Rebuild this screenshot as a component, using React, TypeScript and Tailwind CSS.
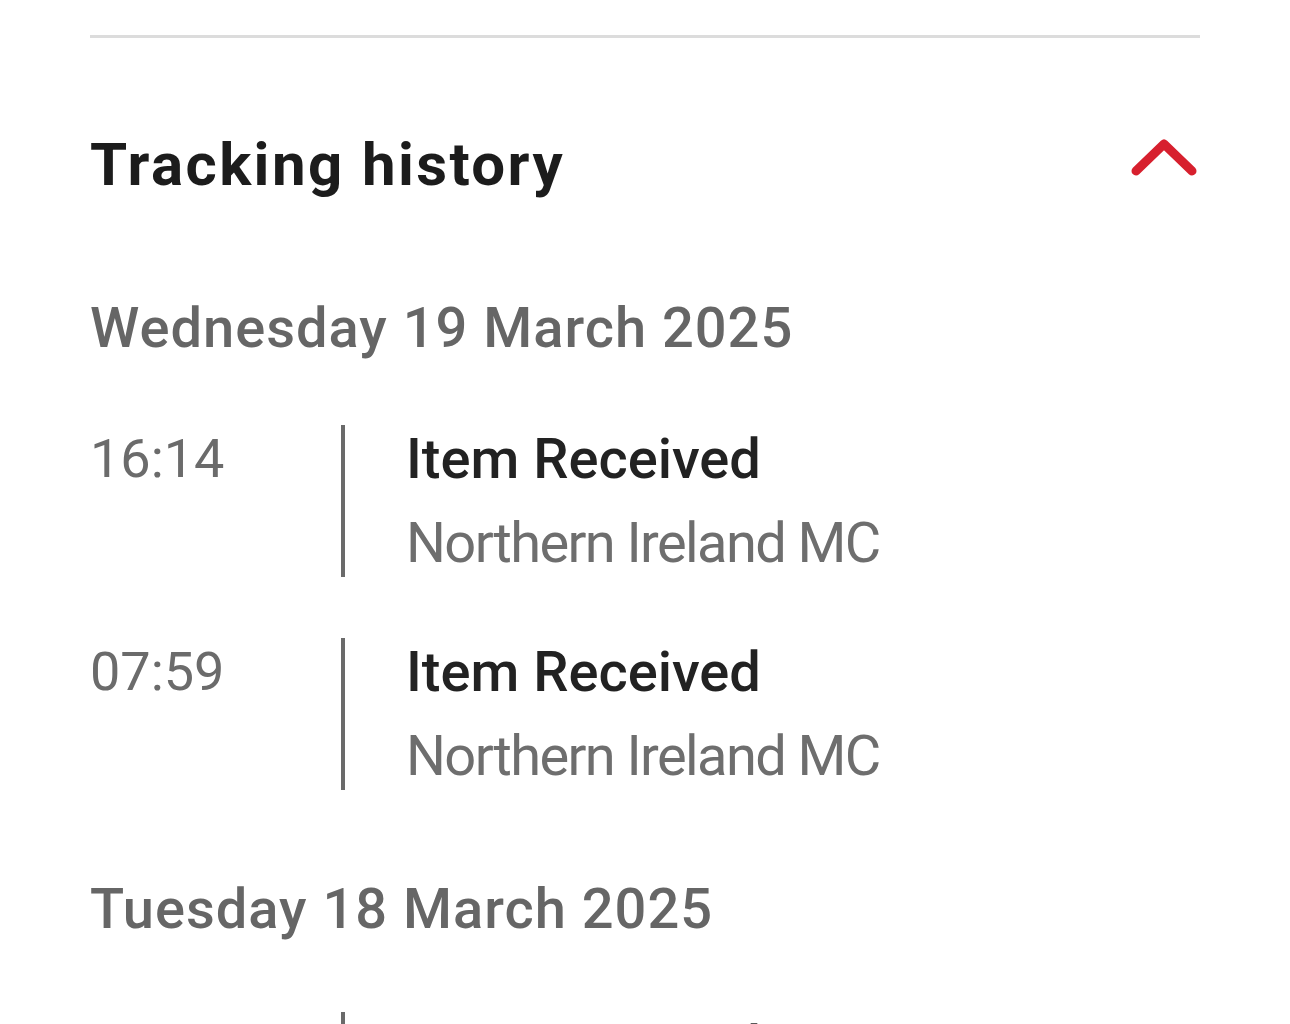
const history = [
  {
    date: 'Wednesday 19 March 2025',
    events: [
      { time: '16:14', title: 'Item Received', place: 'Northern Ireland MC' },
      { time: '07:59', title: 'Item Received', place: 'Northern Ireland MC' },
    ],
  },
  {
    date: 'Tuesday 18 March 2025',
    events: [{ time: '22:02', title: 'Item Received', place: 'Northern Ireland MC' }],
  },
];

function Chevron() {
  return (
    <svg width="72" height="48" viewBox="0 0 72 48" fill="none" className="mt-[4px]">
      <polyline points="8,38 36,11 64,38" stroke="#d7202e" strokeWidth="9" strokeLinecap="round" strokeLinejoin="round" />
    </svg>
  );
}

export default function App() {
  return (
    <div className="h-[1024px] overflow-hidden bg-white px-[90px] pt-[35px] font-['Roboto','Liberation_Sans',sans-serif]">
      <div className="h-[3px] bg-[#dcdcdc]" />

      <div className="mt-[91px] flex items-start justify-between">
        <h2 className="text-[60px] leading-[72px] font-bold text-[#1c1c1c] tracking-[2.4px]">Tracking history</h2>
        <Chevron />
      </div>

      {history.map((day, i) => (
        <div key={day.date} className={i === 0 ? 'mt-[95px]' : 'mt-[87px]'}>
          <h3 className="text-[56px] leading-[64px] font-medium text-[#666666] tracking-[1px]">{day.date}</h3>
          <div className={`${i === 0 ? 'mt-[65px]' : 'mt-[71px]'} flex flex-col gap-[61px]`}>
            {day.events.map((ev, j) => (
              <div key={j} className="flex h-[152px]">
                <div className="w-[251px] pt-[2px] text-[54px] leading-[64px] text-[#6b6b6b]">{ev.time}</div>
                <div className="w-[4px] bg-[#6a6a6a]" />
                <div className="pl-[61px] pt-[2px]">
                  <div className="text-[56px] leading-[64px] font-medium text-[#222222]">{ev.title}</div>
                  <div className="mt-[20px] text-[56px] leading-[64px] tracking-[-1.6px] text-[#6e6e6e]">{ev.place}</div>
                </div>
              </div>
            ))}
          </div>
        </div>
      ))}
    </div>
  );
}
